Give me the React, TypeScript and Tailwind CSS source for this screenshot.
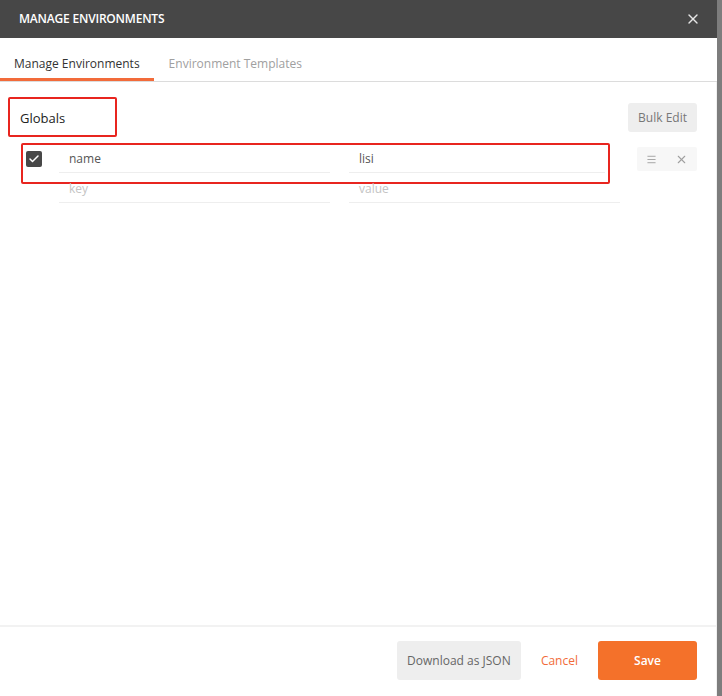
import { Check, X, Menu } from "lucide-react";

const font = { fontFamily: '"Open Sans", "Liberation Sans", sans-serif' };

export default function App() {
  return (
    <div className="flex h-[696px] w-[722px] bg-white" style={font}>
      <div className="flex w-[717px] flex-col">
        {/* Header */}
        <div className="flex h-[38px] items-center justify-between bg-[#474747] pl-[19px] pr-[16px]">
          <span className="text-[12px] font-semibold tracking-[-0.2px] text-white">MANAGE ENVIRONMENTS</span>
          <X size={16} strokeWidth={2} className="text-[#e6e6e6]" />
        </div>

        {/* Tabs */}
        <div className="flex h-[44px] items-end border-b border-[#dcdcdc]">
          <div className="flex h-full items-center border-b-[3px] border-[#f26b3a] px-[14px] pt-[11px] text-[12px] text-[#333]">
            Manage Environments
          </div>
          <div className="flex h-full items-center px-[15px] pt-[8px] text-[12px] text-[#a0a0a0]">Environment Templates</div>
        </div>

        {/* Body */}
        <div className="flex flex-1 flex-col border-r border-[#f0f0f0]">
          <div className="flex items-start justify-between pl-[8px] pr-[19px] pt-[15px]">
            <div className="flex h-[40px] w-[109px] items-center rounded-[2px] border-2 border-[#e8251f] pl-[10px] pt-[3px] text-[13px] text-[#222]">
              Globals
            </div>
            <div className="mt-[6px] flex h-[29px] items-center rounded-[3px] bg-[#eeeeee] px-[10px] text-[12px] text-[#777]">
              Bulk Edit
            </div>
          </div>

          <div className="mt-[6px] flex items-start pl-[21px] pr-[19px]">
            <div className="relative w-[589px]">
              {/* filled row */}
              <div className="flex h-[41px] w-[589px] items-start rounded-[2px] border-2 border-[#e8251f]">
                <div className="ml-[3px] mt-[6px] flex h-[16px] w-[16px] shrink-0 items-center justify-center rounded-[2px] bg-[#474747]">
                  <Check size={12} strokeWidth={3} className="text-white" />
                </div>
                <div className="ml-[17px] flex h-[28px] w-[271px] shrink-0 items-center border-b border-[#eeeeee] pl-[10px] text-[12px] text-[#555]">
                  name
                </div>
                <div className="ml-[19px] flex h-[28px] w-[256px] shrink-0 items-center border-b border-[#eeeeee] pl-[10px] text-[12px] text-[#555]">
                  lisi
                </div>
              </div>
              {/* empty row */}
              <div className="flex h-[20px] items-start">
                <div className="ml-[38px] flex h-[19px] w-[271px] shrink-0 items-start border-b border-[#eeeeee] pl-[10px] text-[12px] leading-[10px] text-[#c4c4c4]">
                  key
                </div>
                <div className="ml-[19px] flex h-[19px] w-[271px] shrink-0 items-start border-b border-[#eeeeee] pl-[10px] text-[12px] leading-[10px] text-[#c4c4c4]">
                  value
                </div>
              </div>
            </div>
            <div className="ml-[27px] mt-[4px] flex h-[24px] w-[61px] items-center justify-around rounded-[2px] bg-[#f7f7f7] text-[#a0a0a0]">
              <Menu size={11} strokeWidth={2} />
              <X size={13} strokeWidth={2} />
            </div>
          </div>

          <div className="flex-1" />

          {/* Footer */}
          <div className="flex h-[71px] items-start justify-end gap-[20px] border-t-2 border-[#f2f2f2] pr-[19px] pt-[14px]">
            <div className="flex h-[39px] w-[124px] items-center justify-center rounded-[3px] bg-[#eeeeee] text-[12px] text-[#666]">
              Download as JSON
            </div>
            <div className="flex h-[39px] items-center text-[12px] text-[#f26b3a]">Cancel</div>
            <div className="flex h-[39px] w-[99px] items-center justify-center rounded-[3px] bg-[#f4712a] text-[12px] font-semibold text-white">
              Save
            </div>
          </div>
        </div>
      </div>
      <div className="w-[5px] bg-[#7d7d7d]" />
    </div>
  );
}
